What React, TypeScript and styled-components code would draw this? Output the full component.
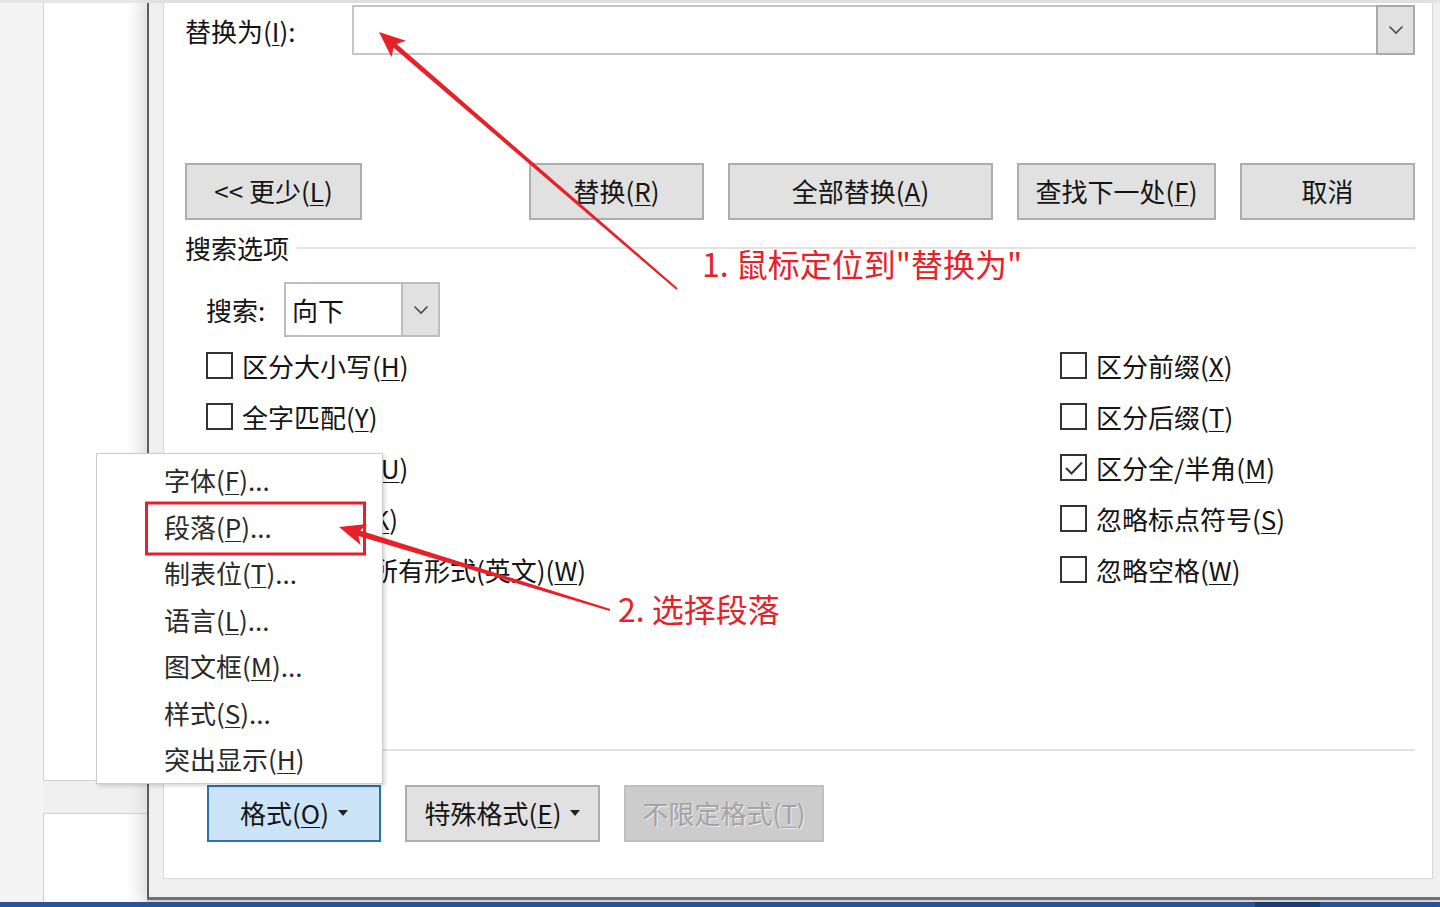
import React from 'react';
import styled, { createGlobalStyle, css } from 'styled-components';

const FONT = `"Noto Sans CJK SC", "Noto Sans", "Liberation Sans", sans-serif`;

const GlobalStyle = createGlobalStyle`
  html, body {
    margin: 0;
    padding: 0;
  }
  body {
    font-family: ${FONT};
  }
  * {
    box-sizing: border-box;
  }
`;

const Screen = styled.div`
  position: relative;
  width: 1440px;
  height: 907px;
  overflow: hidden;
  display: flex;
  flex-direction: column;
  background: #f0f0f0;
  font-family: ${FONT};
  color: #141414;
`;

const TopEdge = styled.div`
  flex: none;
  height: 3px;
  background: #e6e6e6;
`;

const Workspace = styled.div`
  flex: 1;
  min-height: 0;
  display: flex;
  background: #d9d9d9;
`;

const Gutter = styled.div`
  flex: none;
  width: 43px;
  background: #f4f4f4;
`;

const PageColumn = styled.div`
  flex: none;
  width: 104px;
  display: flex;
  flex-direction: column;
  background: #f0f0f0;
`;

const PageSheet = styled.div<{ $first?: boolean }>`
  background: linear-gradient(to right, #fff 78%, #f1f1f1 100%);
  border-left: 1px solid #d0d0d0;
  ${p =>
    p.$first
      ? css`
          height: 778px;
          border-bottom: 1px solid #d0d0d0;
        `
      : css`
          flex: 1;
          margin-top: 32px;
          border-top: 1px solid #d0d0d0;
        `}
`;

const Dialog = styled.div`
  position: relative;
  flex: 1;
  display: flex;
  margin-bottom: 2px;
  padding: 0 7px 18px 14px;
  background: #f0f0f0;
  border-left: 2px solid #5d5d5d;
  border-bottom: 3px solid #707070;
  box-shadow: -6px 0 12px rgba(0, 0, 0, 0.07);
`;

const Panel = styled.div`
  flex: 1;
  display: flex;
  flex-direction: column;
  padding: 0 17px 0 21px;
  background: #fff;
  border: 1px solid #d7d7d7;
  border-top: none;
`;

const Taskbar = styled.div`
  flex: none;
  height: 5px;
  display: flex;
  background: #2a5593;
`;

const TaskItem = styled.div`
  margin-left: 1255px;
  width: 65px;
  background: #1b3d72;
`;

const Key = styled.u`
  text-decoration-thickness: 1px;
  text-underline-offset: 3px;
`;

const ReplaceRow = styled.div`
  display: flex;
  align-items: center;
  height: 50px;
  margin-top: 2px;
`;

const FieldLabel = styled.div`
  width: 167px;
  padding-top: 2px;
  font-size: 26px;
  line-height: 1;
`;

const ComboBox = styled.div`
  flex: 1;
  height: 50px;
  display: flex;
  justify-content: flex-end;
  background: #fff;
  border: 2px solid #c6c6c6;
`;

const ComboArrow = styled.div`
  width: 39px;
  margin: -2px -2px -2px 0;
  display: flex;
  align-items: center;
  justify-content: center;
  background: #e1e1e1;
  border: 2px solid #a9a9a9;
`;

const ButtonRow = styled.div`
  display: flex;
  justify-content: space-between;
  height: 57px;
  margin-top: 108px;
`;

const ButtonGroup = styled.div`
  display: flex;
  gap: 24px;
`;

const Button = styled.button<{ $w: number; $variant?: 'focus' | 'disabled' }>`
  width: ${p => p.$w}px;
  height: 57px;
  padding: 0 0 2px;
  display: flex;
  align-items: center;
  justify-content: center;
  font-family: ${FONT};
  font-size: 26px;
  line-height: 1;
  color: #141414;
  background: #e1e1e1;
  border: 2px solid #adadad;
  ${p =>
    p.$variant === 'focus' &&
    css`
      background: #cce4f7;
      border-color: #2f6fad;
    `}
  ${p =>
    p.$variant === 'disabled' &&
    css`
      background: #cccccc;
      border-color: #bfbfbf;
      color: #a3a3a3;
      text-shadow: 1px 1px 0 #ececec;
    `}
`;

const Caret = styled.svg`
  margin-left: 9px;
`;

const SectionRow = styled.div`
  display: flex;
  align-items: center;
  height: 30px;
  margin-top: 13px;
  font-size: 26px;
  line-height: 1;
`;

const SectionLine = styled.div`
  flex: 1;
  height: 2px;
  margin-left: 8px;
  background: #e3e3e3;
`;

const SearchRow = styled.div`
  display: flex;
  align-items: center;
  height: 55px;
  margin-top: 19px;
  padding-left: 21px;
  font-size: 26px;
  line-height: 1;
`;

const SearchLabel = styled.div`
  width: 78px;
`;

const Select = styled.div`
  width: 156px;
  height: 55px;
  display: flex;
  background: #fff;
  border: 2px solid #bdbdbd;
`;

const SelectValue = styled.div`
  flex: 1;
  display: flex;
  align-items: center;
  padding-left: 6px;
`;

const SelectArrow = styled.div`
  width: 37px;
  display: flex;
  align-items: center;
  justify-content: center;
  background: #e1e1e1;
  border-left: 2px solid #bdbdbd;
`;

const OptionsGrid = styled.div`
  display: grid;
  grid-template-columns: 854px 1fr;
  grid-template-rows: repeat(5, 51px);
  grid-auto-flow: column;
  margin-top: 3px;
  padding-left: 21px;
`;

const OptionRow = styled.div`
  display: flex;
  align-items: center;
  gap: 9px;
  font-size: 26px;
  line-height: 1;
`;

const Box = styled.div`
  width: 27px;
  height: 27px;
  display: flex;
  align-items: center;
  justify-content: center;
  background: #fff;
  border: 2px solid #333;
`;

const Separator = styled.div`
  height: 2px;
  margin-top: 154px;
  background: #e3e3e3;
`;

const FooterRow = styled.div`
  display: flex;
  gap: 24px;
  margin-top: 34px;
  padding-left: 22px;
`;

const PopupMenu = styled.ul`
  position: absolute;
  left: 96px;
  top: 453px;
  width: 287px;
  margin: 0;
  padding: 3px 0 0;
  list-style: none;
  background: #fff;
  border: 1px solid #cccccc;
  box-shadow: 2px 2px 4px rgba(0, 0, 0, 0.16);
`;

const MenuItem = styled.li`
  height: 46.5px;
  display: flex;
  align-items: center;
  padding-left: 67px;
  font-size: 26px;
  line-height: 1;
  color: #2a2a2a;
`;

const Overlay = styled.svg`
  position: absolute;
  left: 0;
  top: 0;
  pointer-events: none;
`;

const Note = styled.div<{ $x: number; $y: number }>`
  position: absolute;
  left: ${p => p.$x}px;
  top: ${p => p.$y}px;
  font-size: 32px;
  line-height: 1;
  color: #e62129;
  white-space: nowrap;
`;

type Pt = [number, number];

function arrowPoints(tail: Pt, tip: Pt, head: number, headW: number, tailW: number, neckW: number) {
  const dx = tip[0] - tail[0];
  const dy = tip[1] - tail[1];
  const len = Math.hypot(dx, dy);
  const ux = dx / len;
  const uy = dy / len;
  const nx = -uy;
  const ny = ux;
  const base: Pt = [tip[0] - ux * head, tip[1] - uy * head];
  const neck: Pt = [tip[0] - ux * head * 0.82, tip[1] - uy * head * 0.82];
  const pts: Pt[] = [
    [tail[0] + nx * tailW, tail[1] + ny * tailW],
    [neck[0] + nx * neckW, neck[1] + ny * neckW],
    [base[0] + nx * headW, base[1] + ny * headW],
    tip,
    [base[0] - nx * headW, base[1] - ny * headW],
    [neck[0] - nx * neckW, neck[1] - ny * neckW],
    [tail[0] - nx * tailW, tail[1] - ny * tailW],
  ];
  return pts.map(p => `${p[0].toFixed(1)},${p[1].toFixed(1)}`).join(' ');
}

const Chevron = () => (
  <svg width="16" height="10" viewBox="0 0 16 10">
    <polyline points="1.5,1.5 8,8 14.5,1.5" fill="none" stroke="#4a4a4a" strokeWidth="1.6" />
  </svg>
);

const CaretDown = () => (
  <Caret width="10" height="6" viewBox="0 0 10 6">
    <polygon points="0,0 10,0 5,6" fill="#222" />
  </Caret>
);

const CheckMark = () => (
  <svg width="20" height="16" viewBox="0 0 20 16">
    <polyline points="2,8 7.5,13.5 18,2.5" fill="none" stroke="#333" strokeWidth="2" />
  </svg>
);

interface Option {
  pre: string;
  k: string;
  checked?: boolean;
}

const OPTIONS: Option[] = [
  { pre: '区分大小写', k: 'H' },
  { pre: '全字匹配', k: 'Y' },
  { pre: '使用通配符', k: 'U' },
  { pre: '同音(英文)', k: 'K' },
  { pre: '查找单词的所有形式(英文)', k: 'W' },
  { pre: '区分前缀', k: 'X' },
  { pre: '区分后缀', k: 'T' },
  { pre: '区分全/半角', k: 'M', checked: true },
  { pre: '忽略标点符号', k: 'S' },
  { pre: '忽略空格', k: 'W' },
];

const MENU: { pre: string; k: string; dots: boolean }[] = [
  { pre: '字体', k: 'F', dots: true },
  { pre: '段落', k: 'P', dots: true },
  { pre: '制表位', k: 'T', dots: true },
  { pre: '语言', k: 'L', dots: true },
  { pre: '图文框', k: 'M', dots: true },
  { pre: '样式', k: 'S', dots: true },
  { pre: '突出显示', k: 'H', dots: false },
];

export default function App() {
  return (
    <>
      <GlobalStyle />
      <Screen>
        <TopEdge />
        <Workspace>
          <Gutter />
          <PageColumn>
            <PageSheet $first />
            <PageSheet />
          </PageColumn>
          <Dialog>
            <Panel>
              <ReplaceRow>
                <FieldLabel>
                  替换为(<Key>I</Key>):
                </FieldLabel>
                <ComboBox>
                  <ComboArrow>
                    <Chevron />
                  </ComboArrow>
                </ComboBox>
              </ReplaceRow>

              <ButtonRow>
                <Button $w={177}>
                  &lt;&lt; 更少(<Key>L</Key>)
                </Button>
                <ButtonGroup>
                  <Button $w={175}>
                    替换(<Key>R</Key>)
                  </Button>
                  <Button $w={265}>
                    全部替换(<Key>A</Key>)
                  </Button>
                  <Button $w={199}>
                    查找下一处(<Key>F</Key>)
                  </Button>
                  <Button $w={175}>取消</Button>
                </ButtonGroup>
              </ButtonRow>

              <SectionRow>
                搜索选项
                <SectionLine />
              </SectionRow>

              <SearchRow>
                <SearchLabel>搜索:</SearchLabel>
                <Select>
                  <SelectValue>向下</SelectValue>
                  <SelectArrow>
                    <Chevron />
                  </SelectArrow>
                </Select>
              </SearchRow>

              <OptionsGrid>
                {OPTIONS.map((o, i) => (
                  <OptionRow key={`${o.pre}-${i}`}>
                    <Box>{o.checked && <CheckMark />}</Box>
                    <span>
                      {o.pre}(<Key>{o.k}</Key>)
                    </span>
                  </OptionRow>
                ))}
              </OptionsGrid>

              <Separator />

              <FooterRow>
                <Button $w={174} $variant="focus">
                  格式(<Key>O</Key>)
                  <CaretDown />
                </Button>
                <Button $w={195}>
                  特殊格式(<Key>E</Key>)
                  <CaretDown />
                </Button>
                <Button $w={200} $variant="disabled">
                  不限定格式(<Key>T</Key>)
                </Button>
              </FooterRow>
            </Panel>
          </Dialog>
        </Workspace>
        <Taskbar>
          <TaskItem />
        </Taskbar>

        <PopupMenu>
          {MENU.map(m => (
            <MenuItem key={m.pre}>
              {m.pre}(<Key>{m.k}</Key>){m.dots ? '...' : ''}
            </MenuItem>
          ))}
        </PopupMenu>

        <Overlay width="1440" height="907" viewBox="0 0 1440 907">
          <rect x="146.5" y="503" width="218" height="51" fill="none" stroke="#e62129" strokeWidth="3" />
          <polygon points={arrowPoints([677, 289], [379, 32], 26, 11, 1, 2.4)} fill="#e62129" />
          <polygon points={arrowPoints([610, 610], [339, 527], 26, 11, 1, 3)} fill="#e62129" />
        </Overlay>

        <Note $x={702} $y={247}>1. 鼠标定位到"替换为"</Note>
        <Note $x={618} $y={592}>2. 选择段落</Note>
      </Screen>
    </>
  );
}
